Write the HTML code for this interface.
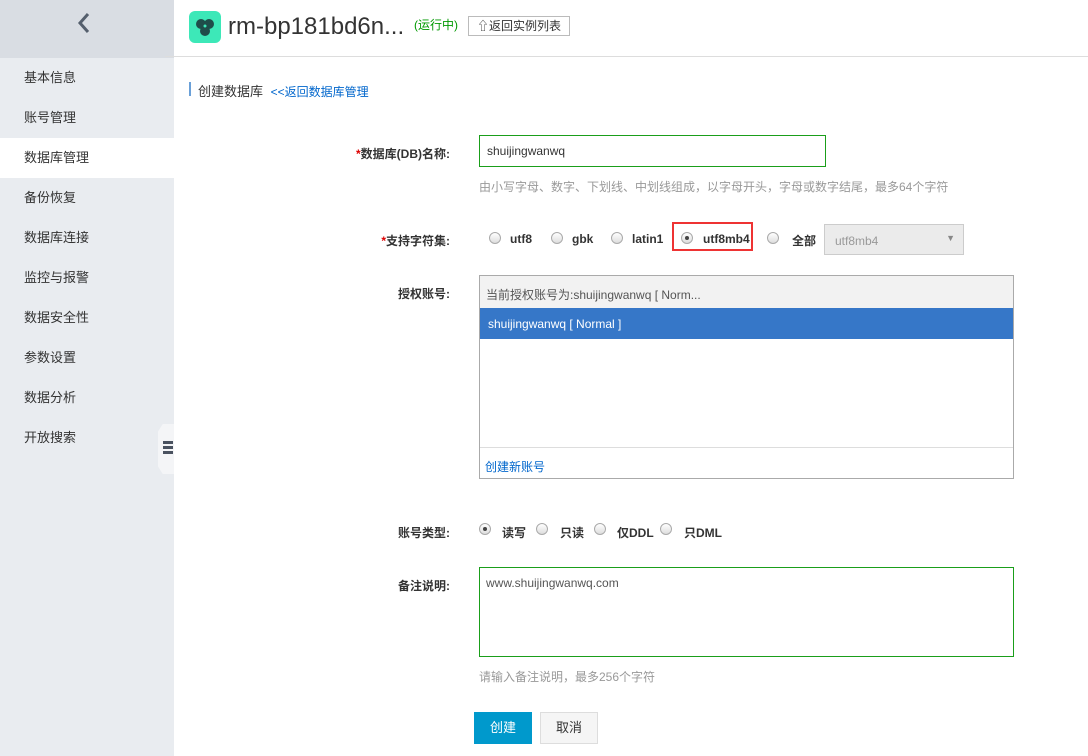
<!DOCTYPE html>
<html><head><meta charset="utf-8"><style>
*{margin:0;padding:0;box-sizing:border-box}
body{width:1088px;height:756px;overflow:hidden;background:#fff;font-family:"Liberation Sans","Noto Sans CJK SC",sans-serif;font-size:12px;color:#333;position:relative}
.a{position:absolute}
.side{left:0;top:0;width:174px;height:756px;background:#e9ecf0}
.side .top{height:58px;background:#d9dde3}
.side .it{height:40px;line-height:40px;padding-left:24px;font-size:13px;color:#333}
.side .on{background:#fff}
.lbl{font-weight:bold;font-size:12px;color:#333;text-align:right;width:120px}
.red{color:#d00}
.rad{display:inline-block;width:12px;height:12px;border:1px solid #aaa;border-radius:50%;background:linear-gradient(#fff,#ddd);vertical-align:-2px;position:relative}
.rad.c::after{content:"";position:absolute;left:3px;top:3px;width:4px;height:4px;border-radius:50%;background:#444}
.ro{font-weight:bold;color:#333;font-size:12px}
</style></head><body>
<div class="a side">
<div class="top"><svg class="a" style="left:77px;top:12px" width="14" height="22" viewBox="0 0 14 22"><path d="M11 2 L3 11 L11 20" stroke="#555f6d" stroke-width="3" fill="none"/></svg></div>
<div class="it">基本信息</div><div class="it">账号管理</div><div class="it on">数据库管理</div><div class="it">备份恢复</div><div class="it">数据库连接</div><div class="it">监控与报警</div><div class="it">数据安全性</div><div class="it">参数设置</div><div class="it">数据分析</div><div class="it">开放搜索</div>
</div>
<div class="a" style="left:158px;top:424px;width:16px;height:50px;background:#f4f5f7;clip-path:polygon(30% 0,100% 0,100% 100%,30% 100%,0 85%,0 15%)"></div>
<div class="a" style="left:163px;top:441px;width:10px;height:3px;background:#4a5260"></div>
<div class="a" style="left:163px;top:446px;width:10px;height:3px;background:#4a5260"></div>
<div class="a" style="left:163px;top:451px;width:10px;height:3px;background:#4a5260"></div>
<div class="a" style="left:189px;top:11px;width:32px;height:32px;border-radius:6px;background:#3de8b8"></div>
<svg class="a" style="left:194px;top:16px" width="22" height="22" viewBox="0 0 22 22"><circle cx="7" cy="8" r="5" fill="#1f4d4a"/><circle cx="15" cy="8" r="5" fill="#1f4d4a"/><circle cx="11" cy="15" r="5" fill="#1f4d4a"/><circle cx="11" cy="10" r="1.5" fill="#3de8b8"/></svg>
<div class="a" style="left:228px;top:12px;font-size:24px;color:#333;line-height:30px">rm-bp181bd6n...</div>
<div class="a" style="left:414px;top:16px;font-size:12px;color:#090">(运行中)</div>
<div class="a" style="left:468px;top:16px;width:102px;height:20px;border:1px solid #bbb;font-size:12px;line-height:18px;text-align:center;color:#333">⇧返回实例列表</div>
<div class="a" style="left:165px;top:56px;width:923px;height:1px;background:#ddd"></div>
<div class="a" style="left:189px;top:82px;width:2px;height:14px;background:#6aa0d8"></div>
<div class="a" style="left:198px;top:81px;font-size:13px;color:#333">创建数据库 <span style="color:#06c;font-size:12px;margin-left:4px">&lt;&lt;返回数据库管理</span></div>

<div class="a lbl" style="left:330px;top:145px"><span class="red">*</span>数据库(DB)名称:</div>
<div class="a" style="left:479px;top:135px;width:347px;height:32px;border:1px solid #1a9e1a;padding:8px 7px;font-size:12px;color:#333">shuijingwanwq</div>
<div class="a" style="left:479px;top:178px;color:#999;font-size:12px">由小写字母、数字、下划线、中划线组成，以字母开头，字母或数字结尾，最多64个字符</div>

<div class="a lbl" style="left:330px;top:232px"><span class="red">*</span>支持字符集:</div>
<div class="a" style="left:489px;top:231px"><span class="rad"></span></div><div class="a ro" style="left:510px;top:232px">utf8</div>
<div class="a" style="left:551px;top:231px"><span class="rad"></span></div><div class="a ro" style="left:572px;top:232px">gbk</div>
<div class="a" style="left:611px;top:231px"><span class="rad"></span></div><div class="a ro" style="left:632px;top:232px">latin1</div>
<div class="a" style="left:672px;top:222px;width:81px;height:29px;border:2px solid #e33"></div>
<div class="a" style="left:681px;top:231px"><span class="rad c"></span></div><div class="a ro" style="left:703px;top:232px">utf8mb4</div>
<div class="a" style="left:767px;top:231px"><span class="rad"></span></div><div class="a ro" style="left:792px;top:232px">全部</div>
<div class="a" style="left:824px;top:224px;width:140px;height:31px;background:#ebebeb;border:1px solid #ccc;color:#999;padding:9px 10px">utf8mb4<span style="position:absolute;right:8px;top:8px;font-size:9px;color:#888">▼</span></div>

<div class="a lbl" style="left:330px;top:285px">授权账号:</div>
<div class="a" style="left:479px;top:275px;width:535px;height:204px;border:1px solid #aaa"></div>
<div class="a" style="left:480px;top:276px;width:533px;height:32px;background:#f2f2f2;color:#555;padding:10px 6px">当前授权账号为:shuijingwanwq [ Norm...</div>
<div class="a" style="left:480px;top:308px;width:533px;height:31px;background:#3677c8;color:#fff;padding:9px 8px">shuijingwanwq [ Normal ]</div>
<div class="a" style="left:480px;top:447px;width:533px;height:1px;background:#ddd"></div>
<div class="a" style="left:485px;top:458px;color:#06c">创建新账号</div>

<div class="a lbl" style="left:330px;top:524px">账号类型:</div>
<div class="a" style="left:479px;top:522px"><span class="rad c"></span></div><div class="a ro" style="left:502px;top:524px">读写</div>
<div class="a" style="left:536px;top:522px"><span class="rad"></span></div><div class="a ro" style="left:560px;top:524px">只读</div>
<div class="a" style="left:594px;top:522px"><span class="rad"></span></div><div class="a ro" style="left:617px;top:524px">仅DDL</div>
<div class="a" style="left:660px;top:522px"><span class="rad"></span></div><div class="a ro" style="left:684px;top:524px">只DML</div>

<div class="a lbl" style="left:330px;top:577px">备注说明:</div>
<div class="a" style="left:479px;top:567px;width:535px;height:90px;border:1px solid #1a9e1a;padding:8px 6px;color:#555">www.shuijingwanwq.com</div>
<div class="a" style="left:479px;top:668px;color:#999">请输入备注说明，最多256个字符</div>

<div class="a" style="left:474px;top:712px;width:58px;height:32px;background:#0099cc;color:#fff;text-align:center;line-height:32px;font-size:13px">创建</div>
<div class="a" style="left:540px;top:712px;width:58px;height:32px;background:#f5f5f5;border:1px solid #ddd;color:#333;text-align:center;line-height:30px;font-size:13px">取消</div>
</body></html>
